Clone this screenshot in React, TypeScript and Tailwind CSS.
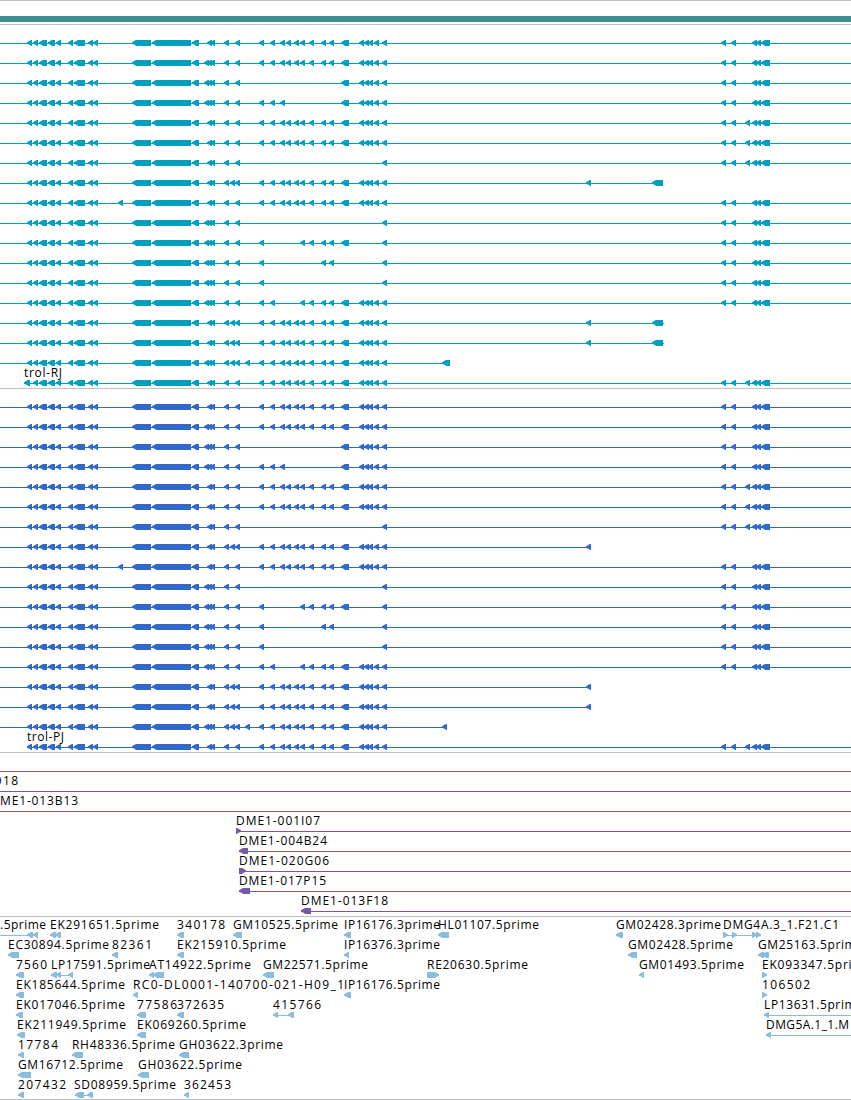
type Span = [number, number];

type Feature = {
  label?: string;
  labelX?: number;
  labelWidth?: number;
  row: number;
  line?: Span;
  blocks?: Span[];
  forward?: boolean;
};

const ROW = 20;

// blocks shared by every transcript
const leftBlocks: Span[] = [
  [27, 32], [33, 38], [39, 47], [48, 55], [56, 61], [68, 73], [74, 85], [88, 93], [93, 98],
  [132, 151], [152, 191], [192, 199], [207, 212], [210, 215], [224, 229], [235, 240],
];
const middleBlocks: Span[] = [
  [259, 264], [270, 275], [280, 285], [286, 291], [294, 299], [300, 305], [309, 314],
  [321, 326], [329, 334], [341, 349], [359, 364], [364, 369], [368, 373], [374, 379],
];
const rightBlocks: Span[] = [[721, 726], [731, 736], [752, 757], [756, 761], [761, 770]];

const tail = [359, 364, 368, 374];
const all = middleBlocks.map((b) => b[0]);

type Transcript = { middle: number[]; extra?: Span[]; right?: boolean; end?: number };

const transcripts: Transcript[] = [
  { middle: all },
  { middle: all, extra: [[204, 209]] },
  { middle: [341, ...tail], extra: [[204, 209]] },
  { middle: [259, 270, 280, 341, ...tail], extra: [[204, 209]] },
  { middle: all, extra: [[745, 750]] },
  { middle: all, extra: [[745, 750]] },
  { middle: [], extra: [[745, 750]] },
  { middle: all, extra: [[230, 235], [586, 591]], right: false, end: 663 },
  { middle: all, extra: [[118, 123]] },
  { middle: [], extra: [[204, 209]] },
  { middle: [259, 300, 309, 321, 329, 341], extra: [[204, 209]] },
  { middle: [259, 321, 329], extra: [[204, 209]] },
  { middle: [259], extra: [[204, 209]] },
  { middle: [259, 270, 300, 309, 321, 329, 341, ...tail], extra: [[204, 209]] },
  { middle: all, extra: [[230, 235], [586, 591]], right: false, end: 664 },
  { middle: all, extra: [[230, 235], [586, 591]], right: false, end: 664 },
  { middle: all, extra: [[204, 209], [230, 235], [245, 250]], right: false, end: 450 },
  { middle: all, extra: [[745, 750]] },
];

function buildTranscripts(kind: 'gene' | 'cds'): Feature[] {
  return transcripts.map((t, row) => {
    const blocks: Span[] = [
      ...leftBlocks,
      ...middleBlocks.filter((b) => t.middle.includes(b[0])),
      [382, 387],
      ...(t.extra || []),
      ...(t.right === false ? [] : rightBlocks),
    ];
    let end = t.end || 851;
    if (end > 660 && end < 670) {
      if (kind === 'gene') blocks.push([652, 663]);
      else end = 591;
    }
    if (end === 450) {
      blocks.push(kind === 'gene' ? [442, 450] : [442, 447]);
      if (kind === 'cds') end = 447;
    }
    const last = row === transcripts.length - 1;
    if (last && kind === 'gene') {
      blocks[0] = [24, 30];
    }
    const start = last ? (kind === 'gene' ? 24 : 27) : 0;
    return { row, line: [start, end], blocks };
  });
}

const geneFeatures: Feature[] = [
  ...buildTranscripts('gene'),
  { row: 17, label: 'trol-RJ', labelX: 24, labelWidth: 38 },
];

const cdsFeatures: Feature[] = [
  ...buildTranscripts('cds'),
  { row: 17, label: 'trol-PJ', labelX: 27, labelWidth: 37 },
];

const bacFeatures: Feature[] = [
  { row: 0, line: [0, 851] },
  { row: 1, label: 'D18', labelX: -7, labelWidth: 25, line: [0, 851] },
  { row: 2, label: 'ME1-013B13', labelX: 0, labelWidth: 78, line: [0, 851] },
  { row: 3, label: 'DME1-001I07', labelX: 236, labelWidth: 84, line: [236, 851], blocks: [[236, 241]], forward: true },
  { row: 4, label: 'DME1-004B24', labelX: 239, labelWidth: 88, line: [239, 851], blocks: [[239, 248]] },
  { row: 5, label: 'DME1-020G06', labelX: 239, labelWidth: 90, line: [239, 851], blocks: [[239, 246]], forward: true },
  { row: 6, label: 'DME1-017P15', labelX: 239, labelWidth: 87, line: [239, 851], blocks: [[239, 250]] },
  { row: 7, label: 'DME1-013F18', labelX: 301, labelWidth: 87, line: [301, 851], blocks: [[301, 311]] },
];

const estFeatures: Feature[] = [
  { row: 0, label: '.5prime', labelX: 0, labelWidth: 46, line: [0, 38], blocks: [[27, 33], [33, 38]] },
  { row: 0, label: 'EK291651.5prime', labelX: 50, labelWidth: 109, blocks: [[50, 56], [55, 61]] },
  { row: 0, label: '340178', labelX: 177, labelWidth: 48, blocks: [[177, 184]] },
  { row: 0, label: 'GM10525.5prime', labelX: 233, labelWidth: 105, blocks: [[233, 242]] },
  { row: 0, label: 'IP16176.3prime', labelX: 344, labelWidth: 96, blocks: [[344, 351]] },
  { row: 0, label: 'HL01107.5prime', labelX: 438, labelWidth: 101, blocks: [[438, 449]] },
  { row: 0, label: 'GM02428.3prime', labelX: 616, labelWidth: 105, blocks: [[616, 623]] },
  { row: 0, label: 'DMG4A.3_1.F21.C1', labelX: 723, labelWidth: 116, line: [723, 761], blocks: [[723, 728], [732, 737], [752, 757], [756, 761]], forward: true },
  { row: 1, label: 'EC30894.5prime', labelX: 8, labelWidth: 101, blocks: [[8, 19]] },
  { row: 1, label: '82361', labelX: 112, labelWidth: 40, blocks: [[112, 118]] },
  { row: 1, label: 'EK215910.5prime', labelX: 177, labelWidth: 109, blocks: [[177, 184]] },
  { row: 1, label: 'IP16376.3prime', labelX: 344, labelWidth: 96, blocks: [[344, 349]] },
  { row: 1, label: 'GM02428.5prime', labelX: 628, labelWidth: 105, blocks: [[628, 637]] },
  { row: 1, label: 'GM25163.5prime', labelX: 758, labelWidth: 105, blocks: [[758, 764], [762, 769]] },
  { row: 2, label: '7560', labelX: 16, labelWidth: 31, blocks: [[16, 24]] },
  { row: 2, label: 'LP17591.5prime', labelX: 51, labelWidth: 99, line: [51, 73], blocks: [[51, 57], [56, 61], [68, 73]] },
  { row: 2, label: 'AT14922.5prime', labelX: 149, labelWidth: 102, blocks: [[149, 154], [153, 164]] },
  { row: 2, label: 'GM22571.5prime', labelX: 263, labelWidth: 105, blocks: [[263, 274]] },
  { row: 2, label: 'RE20630.5prime', labelX: 427, labelWidth: 101, blocks: [[427, 439]], forward: true },
  { row: 2, label: 'GM01493.5prime', labelX: 639, labelWidth: 105, blocks: [[639, 644]] },
  { row: 2, label: 'EK093347.5prime', labelX: 762, labelWidth: 109, blocks: [[762, 767]], forward: true },
  { row: 3, label: 'EK185644.5prime', labelX: 16, labelWidth: 109, blocks: [[16, 24]] },
  { row: 3, label: 'RC0-DL0001-140700-021-H09_1', labelX: 133, labelWidth: 211, blocks: [[133, 138]] },
  { row: 3, label: 'IP16176.5prime', labelX: 344, labelWidth: 96, blocks: [[344, 351]] },
  { row: 3, label: '106502', labelX: 762, labelWidth: 48, blocks: [[762, 767]], forward: true },
  { row: 4, label: 'EK017046.5prime', labelX: 16, labelWidth: 109, blocks: [[16, 23]] },
  { row: 4, label: '77586', labelX: 137, labelWidth: 40, blocks: [[137, 146]] },
  { row: 4, label: '372635', labelX: 177, labelWidth: 47, blocks: [[177, 184]] },
  { row: 4, label: '415766', labelX: 273, labelWidth: 48, line: [273, 294], blocks: [[273, 278], [288, 294]] },
  { row: 4, label: 'LP13631.5prime', labelX: 764, labelWidth: 99, line: [764, 851], blocks: [[764, 769]] },
  { row: 5, label: 'EK211949.5prime', labelX: 17, labelWidth: 109, blocks: [[17, 25]] },
  { row: 5, label: 'EK069260.5prime', labelX: 137, labelWidth: 109, blocks: [[137, 146]] },
  { row: 5, label: 'DMG5A.1_1.M', labelX: 766, labelWidth: 83, line: [766, 851], blocks: [[766, 771]] },
  { row: 6, label: '17784', labelX: 18, labelWidth: 40, blocks: [[18, 24]] },
  { row: 6, label: 'RH48336.5prime', labelX: 72, labelWidth: 103, blocks: [[72, 83]] },
  { row: 6, label: 'GH03622.3prime', labelX: 179, labelWidth: 104, blocks: [[179, 189]] },
  { row: 7, label: 'GM16712.5prime', labelX: 18, labelWidth: 105, blocks: [[18, 31]] },
  { row: 7, label: 'GH03622.5prime', labelX: 138, labelWidth: 104, blocks: [[138, 149]] },
  { row: 8, label: '207432', labelX: 18, labelWidth: 48, blocks: [[18, 24]] },
  { row: 8, label: 'SD08959.5prime', labelX: 74, labelWidth: 102, line: [75, 93], blocks: [[75, 84], [87, 93]] },
  { row: 8, label: '362453', labelX: 184, labelWidth: 47, blocks: [[184, 189]] },
];

function arrowPoints([start, end]: Span, y: number, forward?: boolean) {
  const tip = forward ? end : start;
  const base = forward ? start : end;
  const dir = forward ? -1 : 1;
  const mid = tip + dir * 3;
  const neck = tip + dir * 4;
  return [
    [tip, y - 0.7], [mid, y - 2.5], [neck, y - 3], [base, y - 3],
    [base, y + 3], [neck, y + 3], [mid, y + 2], [tip, y + 0.8],
  ].map((p) => p.join(',')).join(' ');
}

type TrackProps = {
  features: Feature[];
  className: string;
  firstLine: number;
};

function Track({ features, className, firstLine }: TrackProps) {
  return (
    <section className={`w-full overflow-hidden border-b border-[#bfbfbf] ${className}`}>
      <svg className="block h-full w-[851px] fill-current">
        {features.map((feature, index) => {
          const y = firstLine + feature.row * ROW;
          return (
            <g key={index}>
              {feature.line && (
                <rect x={feature.line[0]} y={y} width={feature.line[1] - feature.line[0]} height={1} shapeRendering="crispEdges" />
              )}
              {feature.blocks?.map((block, i) => (
                <polygon key={i} points={arrowPoints(block, y, feature.forward)} />
              ))}
              {feature.label && (
                <text
                  x={feature.labelX}
                  y={y - 6}
                  textLength={feature.labelWidth}
                  className="fill-black font-['Open_Sans','DejaVu_Sans',sans-serif] text-[12px]"
                >
                  {feature.label}
                </text>
              )}
            </g>
          );
        })}
      </svg>
    </section>
  );
}

export default function App() {
  return (
    <main className="flex h-[1100px] w-[851px] flex-col overflow-hidden border-t border-[#bfbfbf] bg-white">
      <header className="h-6 shrink-0 border-b border-[#bfbfbf] pt-[15px]">
        <div className="h-1.5 bg-[#3f8e93]" />
      </header>
      <Track features={geneFeatures} firstLine={18} className="h-[364px] shrink-0 text-[#009ebf]" />
      <Track features={cdsFeatures} firstLine={18} className="h-[364px] shrink-0 text-[#3069cb]" />
      <Track features={bacFeatures} firstLine={18} className="h-[164px] shrink-0 text-[#7659a5]" />
      <Track features={estFeatures} firstLine={18} className="h-[183px] shrink-0 text-[#8abddd]" />
    </main>
  );
}
